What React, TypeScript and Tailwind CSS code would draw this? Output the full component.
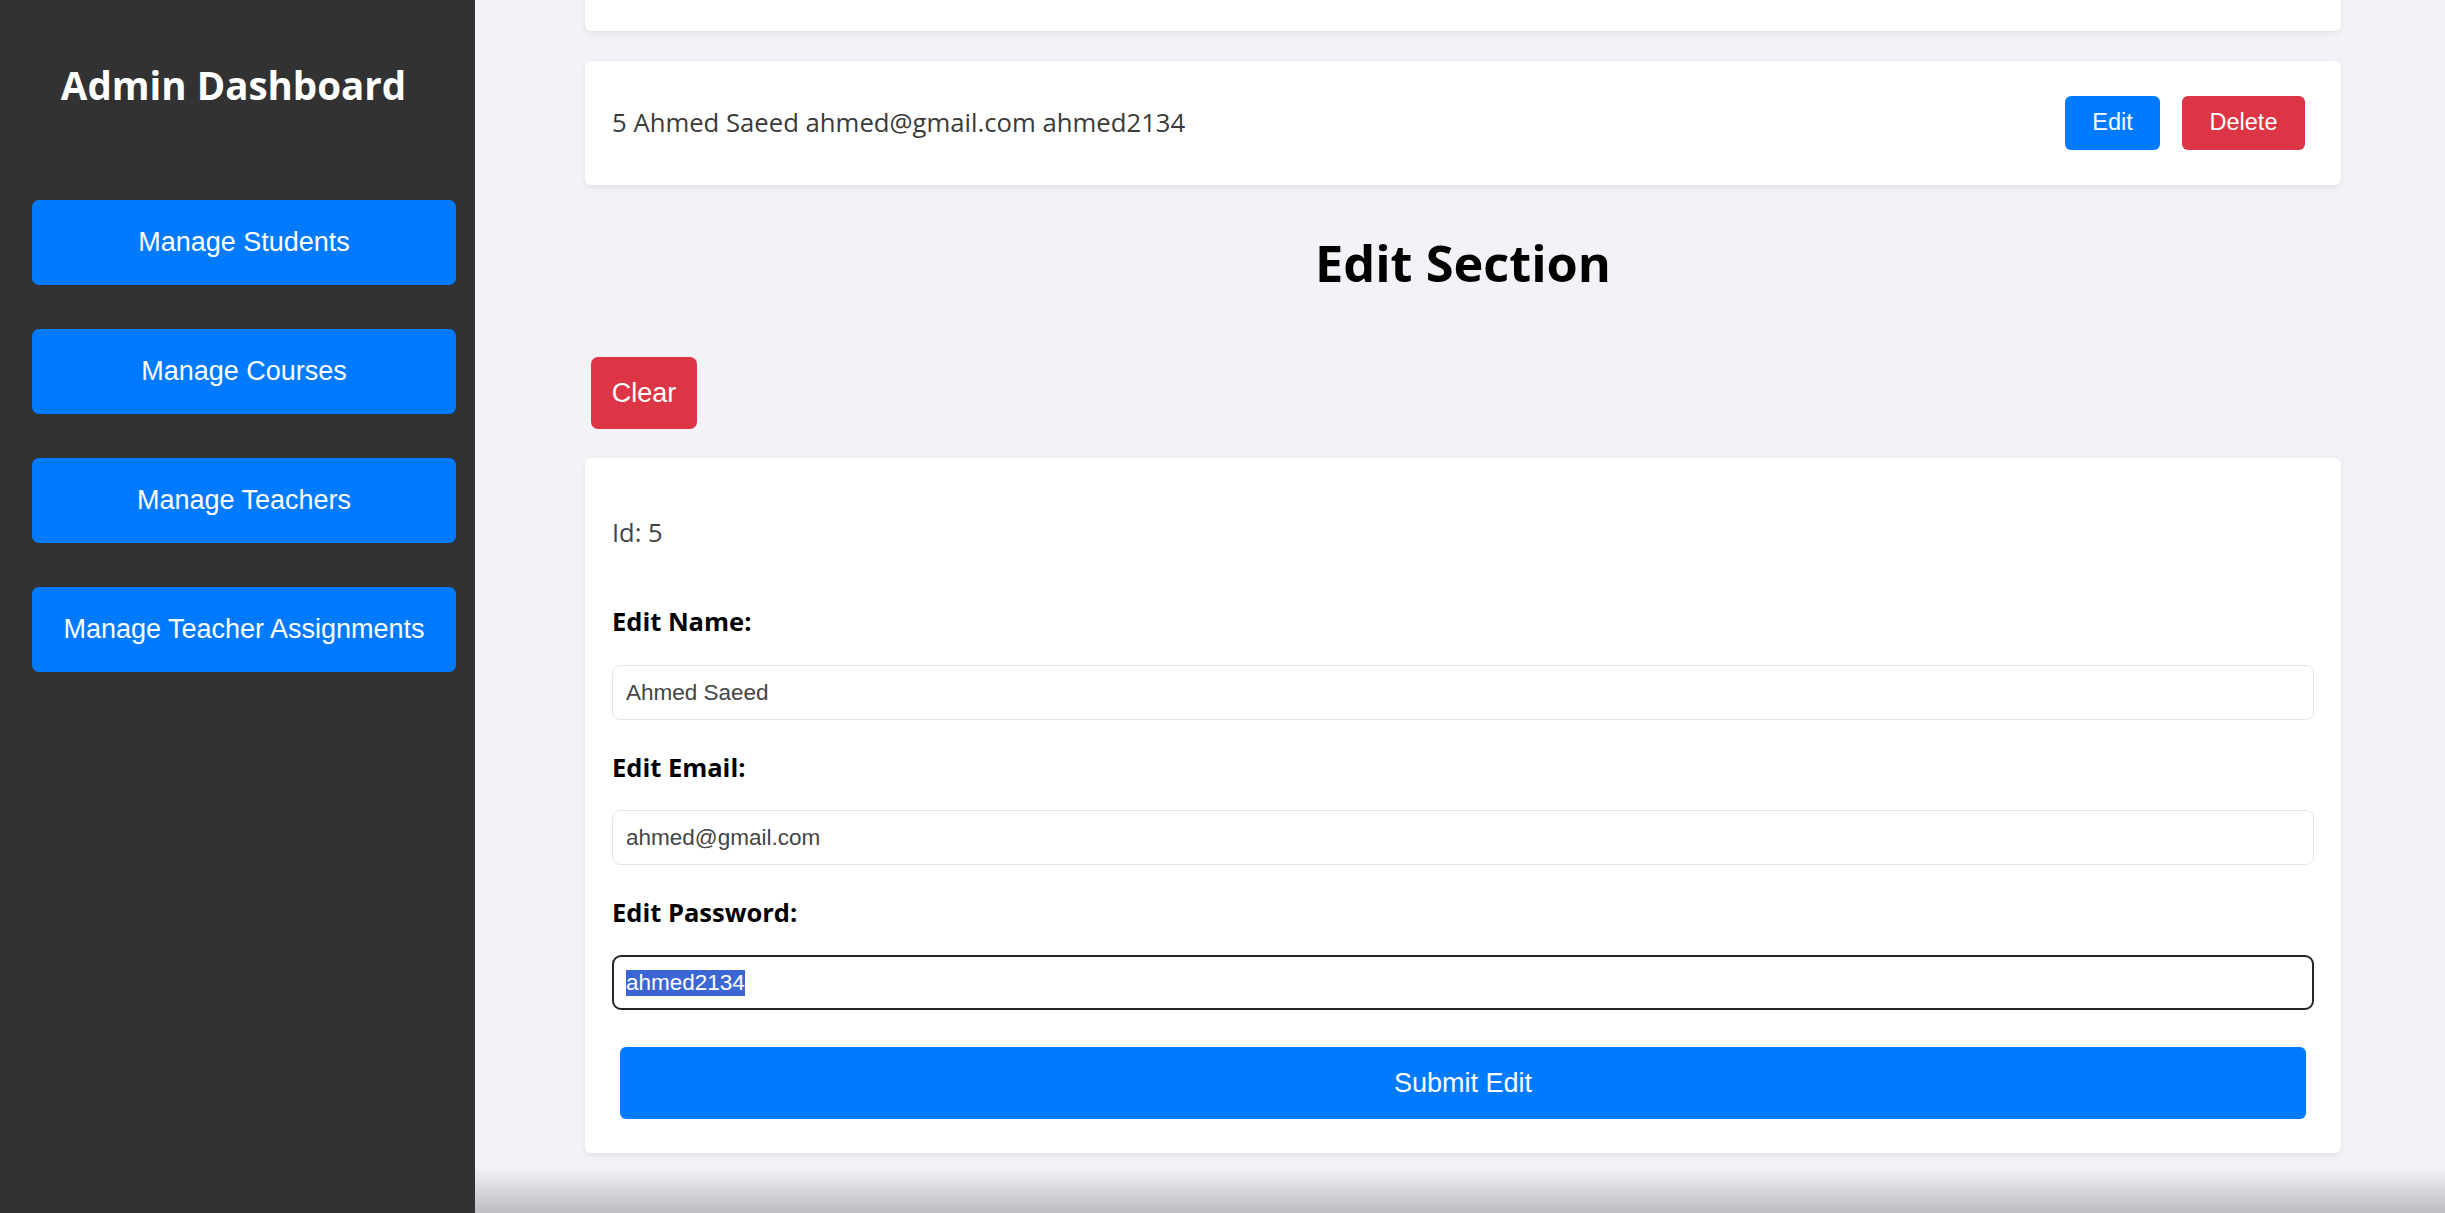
import React from 'react'

// Admin dashboard – edit student screen

const navItems = [
  'Manage Students',
  'Manage Courses',
  'Manage Teachers',
  'Manage Teacher Assignments'
]

const student = {
  id: 5,
  name: 'Ahmed Saeed',
  email: 'ahmed@gmail.com',
  password: 'ahmed2134'
}

export default function App() {
  return (
    <div className="flex h-[1213px] overflow-hidden font-['Open_Sans',sans-serif]">
      {/* Sidebar */}
      <aside className="flex w-[475px] shrink-0 flex-col bg-[#323232] pl-[32px]">
        <h2 className="mt-[63px] ml-[-36px] w-[475px] text-center text-[38.5px] leading-[45px] font-bold text-white">
          Admin Dashboard
        </h2>
        <nav className="mt-[92px] flex flex-col gap-[44px]">
          {navItems.map((item) => (
            <button
              key={item}
              className="h-[85px] w-[424px] rounded-[7px] bg-[#007bff] font-['Liberation_Sans',Arial,sans-serif] text-[27px] text-white"
            >
              {item}
            </button>
          ))}
        </nav>
      </aside>

      {/* Main */}
      <main className="flex flex-1 flex-col bg-[#f3f3f7]">
        <div className="flex flex-col pr-[104px] pl-[110px]">
          {/* previous row, scrolled mostly out of view */}
          <div className="mt-[-93px] h-[124px] rounded-[6px] bg-white shadow-[0_2px_6px_rgba(0,0,0,0.08)]" />

          <StudentRow />

          <h1 className="mt-[48px] text-center text-[50.5px] leading-[60px] font-bold text-black">
            Edit Section
          </h1>

          <div className="mt-[64px]">
            <button className="ml-[6px] h-[72px] w-[106px] rounded-[7px] bg-[#dc3545] font-['Liberation_Sans',Arial,sans-serif] text-[27px] text-white">
              Clear
            </button>
          </div>

          <EditForm />
        </div>

        <div className="mt-auto h-[44px] bg-gradient-to-b from-[#f1f1f5] to-[#bdbdc2]" />
      </main>
    </div>
  )
}

function StudentRow() {
  return (
    <div className="mt-[30px] flex h-[124px] items-center justify-between rounded-[6px] bg-white pr-[36px] pl-[27px] shadow-[0_2px_6px_rgba(0,0,0,0.08)]">
      <span className="text-[25.7px] text-[#3a3a3a]">
        {student.id} {student.name} {student.email} {student.password}
      </span>
      <div className="flex gap-[22px] font-['Liberation_Sans',Arial,sans-serif] text-[23.5px] text-white">
        <button className="h-[54px] w-[95px] rounded-[6px] bg-[#007bff]">Edit</button>
        <button className="h-[54px] w-[123px] rounded-[6px] bg-[#dc3545]">Delete</button>
      </div>
    </div>
  )
}

function EditForm() {
  return (
    <div className="mt-[29px] flex flex-col rounded-[6px] bg-white px-[27px] pt-[55px] pb-[34px] shadow-[0_2px_6px_rgba(0,0,0,0.08)]">
      <p className="text-[25.5px] leading-[38px] text-[#444]">Id: {student.id}</p>

      <label className="mt-[51px] text-[25.5px] leading-[38px] font-bold text-black">Edit Name:</label>
      <FieldBox value={student.name} className="mt-[25px]" />

      <label className="mt-[28px] text-[25.5px] leading-[38px] font-bold text-black">Edit Email:</label>
      <FieldBox value={student.email} className="mt-[24px]" />

      <label className="mt-[28px] text-[25.5px] leading-[38px] font-bold text-black">Edit Password:</label>
      {/* focused input with its text selected */}
      <div className="mt-[24px] flex h-[55px] items-center rounded-[9px] border-[2.5px] border-[#262626] px-[12px] font-['Liberation_Sans',Arial,sans-serif] text-[22.5px]">
        <span className="bg-[#3b66d4] leading-[26px] text-white">{student.password}</span>
      </div>

      <button className="mx-[8px] mt-[37px] h-[72px] rounded-[6px] bg-[#007bff] font-['Liberation_Sans',Arial,sans-serif] text-[27px] text-white">
        Submit Edit
      </button>
    </div>
  )
}

function FieldBox({ value, className }: { value: string; className: string }) {
  return (
    <div
      className={`${className} flex h-[55px] items-center rounded-[8px] border-[1.5px] border-[#e6e6e6] px-[13px] font-['Liberation_Sans',Arial,sans-serif] text-[22.5px] text-[#444]`}
    >
      {value}
    </div>
  )
}
